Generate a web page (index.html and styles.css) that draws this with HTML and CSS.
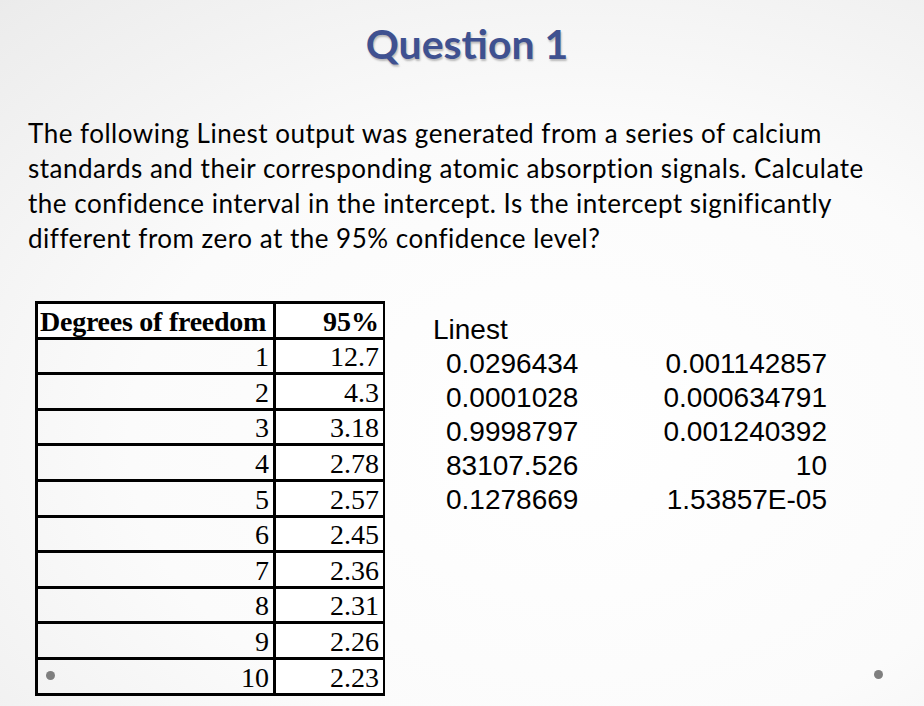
FILE: index.html
```html
<!DOCTYPE html>
<html>
<head>
<meta charset="utf-8">
<link rel="stylesheet" href="styles.css">
</head>
<body>
<div class="slide">
  <h1 class="title">Question 1</h1>
  <p class="question">The following Linest output was generated from a series of calcium<br>standards and their corresponding atomic absorption signals. Calculate<br>the confidence interval in the intercept. Is the intercept significantly<br>different from zero at the 95% confidence level?</p>
  <div class="content">
    <table class="ttable">
      <thead>
        <tr><th class="c1">Degrees of freedom</th><th class="c2">95%</th></tr>
      </thead>
      <tbody>
        <tr><td class="c1">1</td><td class="c2">12.7</td></tr>
        <tr><td class="c1">2</td><td class="c2">4.3</td></tr>
        <tr><td class="c1">3</td><td class="c2">3.18</td></tr>
        <tr><td class="c1">4</td><td class="c2">2.78</td></tr>
        <tr><td class="c1">5</td><td class="c2">2.57</td></tr>
        <tr><td class="c1">6</td><td class="c2">2.45</td></tr>
        <tr><td class="c1">7</td><td class="c2">2.36</td></tr>
        <tr><td class="c1">8</td><td class="c2">2.31</td></tr>
        <tr><td class="c1">9</td><td class="c2">2.26</td></tr>
        <tr><td class="c1">10</td><td class="c2">2.23</td></tr>
      </tbody>
    </table>
    <div class="linest">
      <div class="lhead">Linest</div>
      <div class="lgrid">
        <span class="l">0.0296434</span><span class="r">0.001142857</span>
        <span class="l">0.0001028</span><span class="r">0.000634791</span>
        <span class="l">0.9998797</span><span class="r">0.001240392</span>
        <span class="l">83107.526</span><span class="r">10</span>
        <span class="l">0.1278669</span><span class="r">1.53857E-05</span>
      </div>
    </div>
  </div>
  <span class="dot dot-left"></span>
  <span class="dot dot-right"></span>
</div>
</body>
</html>
```

FILE: styles.css
```css
html, body {
  margin: 0;
  padding: 0;
}
.slide {
  position: relative;
  width: 924px;
  height: 706px;
  overflow: hidden;
  background: radial-gradient(ellipse 120% 110% at 62% 62%, #ffffff 0%, #fbfbfb 40%, #ececec 75%, #dcdcdc 100%);
  font-family: Lato, "Open Sans", sans-serif;
}
.title {
  margin: 0;
  padding-top: 20px;
  text-align: center;
  font-family: Lato, "Open Sans", sans-serif;
  font-weight: 700;
  font-size: 41px;
  line-height: 48px;
  color: #3f5190;
  text-shadow: 1px 2px 2px rgba(0,0,0,0.25);
  padding-left: 10px;
}
.question {
  margin: 0;
  margin-top: 48px;
  padding-left: 28px;
  font-size: 26px;
  letter-spacing: 0.5px;
  line-height: 35px;
  color: #000;
  white-space: nowrap;
}
.content {
  display: flex;
  align-items: flex-start;
  margin-top: 45px;
  padding-left: 35px;
}
.ttable {
  border-collapse: collapse;
  table-layout: fixed;
  font-family: "Liberation Serif", serif;
  font-size: 28px;
  border-left: 3px solid #000;
}
.ttable th, .ttable td {
  height: 32.6px;
  padding: 0 4px 0 4px;
  border-top: 3px solid #000;
  border-bottom: 3px solid #000;
  text-align: right;
  line-height: 30px;
  vertical-align: bottom;
  white-space: nowrap;
}
.ttable th {
  font-weight: 700;
  background: #fff;
}
.ttable .c1 {
  width: 227px;
  border-right: 3px solid #000;
}
.ttable .c2 {
  width: 99px;
  background: #fff;
  border-right: 2px solid #000;
}
.ttable th.c1 {
  text-align: left;
  padding: 0 0 0 2px;
  letter-spacing: -0.25px;
  overflow: visible;
}
.linest {
  margin-left: 48px;
  margin-top: 12px;
  font-family: "Liberation Sans", Arial, sans-serif;
  font-size: 28px;
  color: #000;
}
.lhead {
  line-height: 34px;
}
.lgrid {
  display: grid;
  grid-template-columns: 220px 174px;
  line-height: 34px;
}
.lgrid .l {
  padding-left: 13px;
}
.lgrid .r {
  text-align: right;
}
.dot {
  position: absolute;
  width: 9px;
  height: 9px;
  border-radius: 50%;
  background: #7f7f7f;
}
.dot-left {
  left: 46px;
  top: 671px;
}
.dot-right {
  left: 874px;
  top: 670px;
}
```
